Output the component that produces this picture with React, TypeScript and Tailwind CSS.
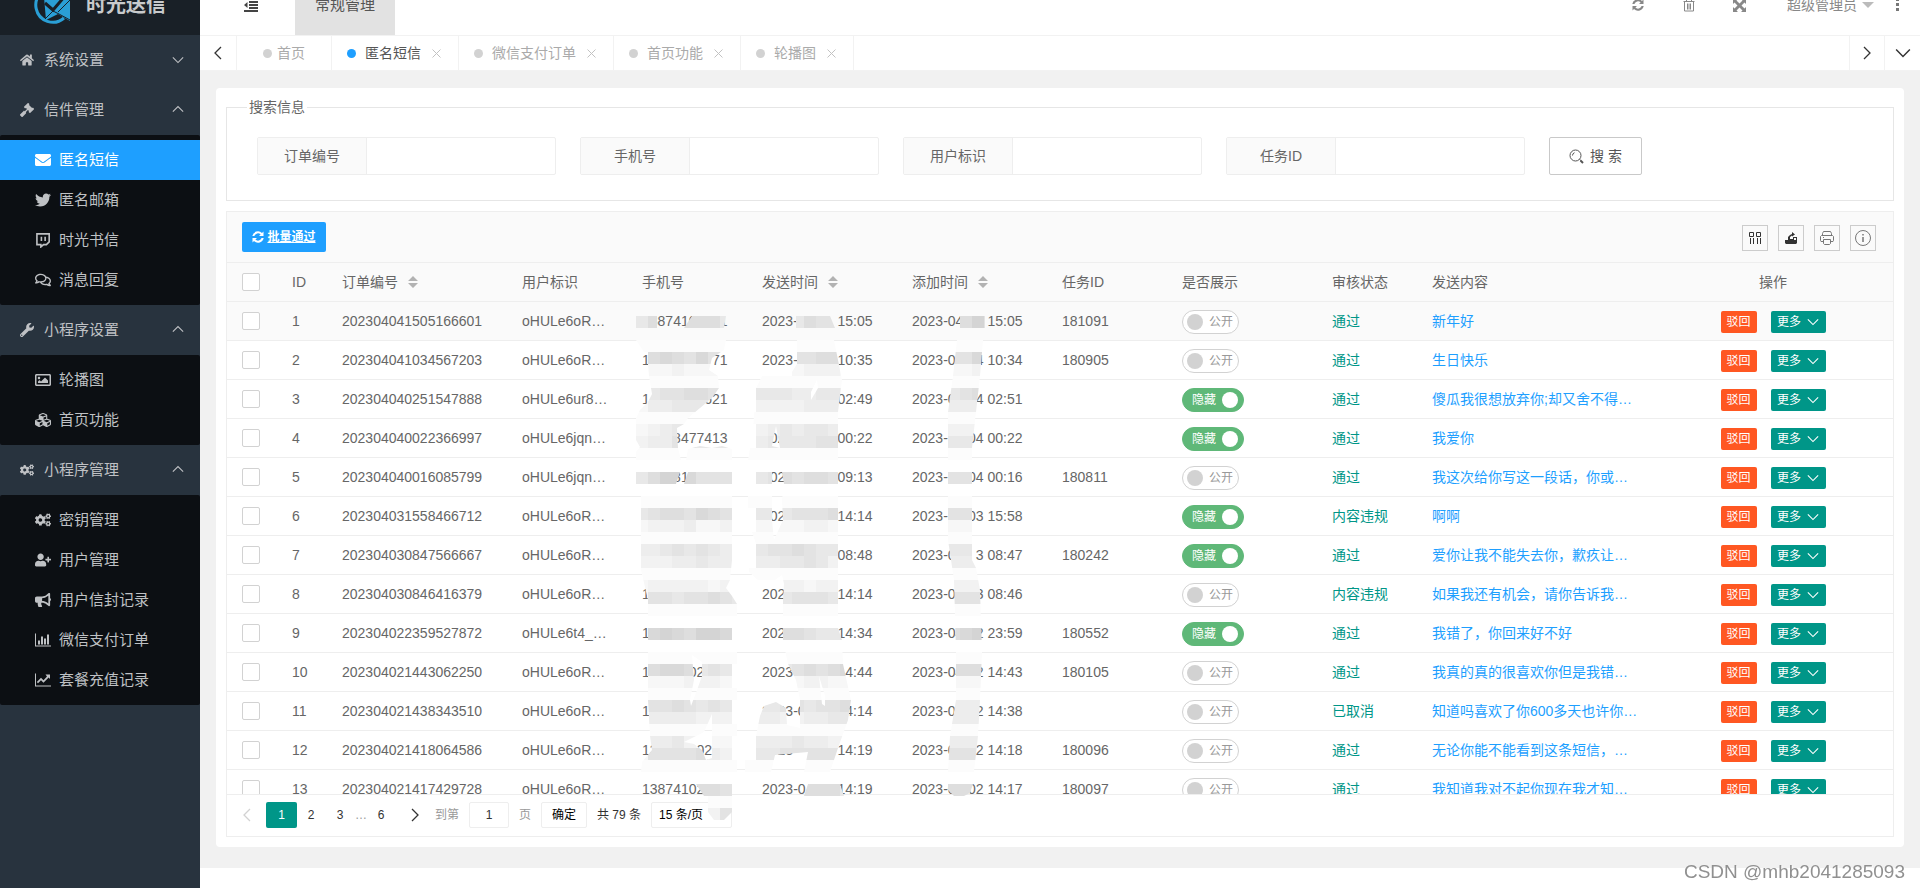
import * as React from "react";
import {
  FaBullhorn,
  FaCogs,
  FaCubes,
  FaEnvelope,
  FaGavel,
  FaHome,
  FaRegComments,
  FaRegImage,
  FaTwitter,
  FaUserPlus,
  FaWrench,
} from "react-icons/fa";
import { clsx } from "clsx";

type IconType = React.ComponentType<{ className?: string }>;

interface MenuGroup {
  title: string;
  icon: IconType;
  open: boolean;
  items: { title: string; icon: IconType; active?: boolean }[];
}

interface OrderRow {
  id: number;
  order: string;
  user: string;
  phone: string;
  send: string;
  add: string;
  task: string;
  hidden: boolean;
  status: string;
  content: string;
}

/* ---------- icons ---------- */

const BarChartIcon: IconType = ({ className }) => (
  <svg viewBox="0 0 16 13" fill="currentColor" className={className}>
    <path d="M0 0h1v12h15v1H0zM3 7h2v4H3zM6 3h2v8H6zM9 5h2v6H9zM12 1h2v10h-2z" />
  </svg>
);

const LineChartIcon: IconType = ({ className }) => (
  <svg viewBox="0 0 16 13" fill="currentColor" className={className}>
    <path d="M0 0h1v12h15v1H0z" />
    <path d="M10.500 1H15v4.500l-1.400-1.400-5.100 5.100-2.500-2.500-3 3L1.800 8.500 6 4.300l2.500 2.500 3.500-3.700z" />
  </svg>
);

const TwitchIcon: IconType = ({ className }) => (
  <svg viewBox="0 0 15 15" fill="none" stroke="currentColor" strokeWidth="1.500" className={className}>
    <path d="M1.800 1.800h11.500v7.400l-2.600 2.600H8L5.500 14v-2.200H1.800zM6 4.500v4M9.500 4.500v4" />
  </svg>
);

function Chevron({ dir, className }: { dir: "up" | "down" | "left" | "right"; className?: string }) {
  const paths = {
    up: "M1 9l6-6 6 6",
    down: "M1 4l6 6 6-6",
    left: "M10 1L4 7l6 6",
    right: "M4 1l6 6-6 6",
  };
  return (
    <svg viewBox="0 0 14 14" fill="none" stroke="currentColor" strokeWidth="1.3" className={className}>
      <path d={paths[dir]} />
    </svg>
  );
}

function Logo() {
  return (
    <svg viewBox="0 0 38 38" className="h-[38px] w-[38px]">
      <path d="M24 3A17 17 0 1 0 30 32" fill="none" stroke="#2a9fd6" strokeWidth="3" />
      <path d="M10 11h26v24l-12-7-12 6z" fill="#2a9fd6" />
      <path d="M11 17l8 7 12-14" fill="none" stroke="#192027" strokeWidth="3" />
      <path d="M11 33l8-8 6 3 11 6M36 14L24 26" fill="none" stroke="#192027" strokeWidth="1" />
    </svg>
  );
}

function ShrinkIcon() {
  return (
    <svg viewBox="0 0 14 14" fill="currentColor" className="h-[14px] w-[14px]">
      <path d="M0 0h14v2H0zM5 3h9v2H5zM5 6h9v2H5zM5 9h9v2H5zM0 12h14v2H0zM3.500 4v6L0 7z" />
    </svg>
  );
}

function RefreshIcon({ className }: { className?: string }) {
  return (
    <svg viewBox="0 0 12 12" fill="currentColor" className={className}>
      <path d="M.300 5A5.800 5.800 0 0 1 10 1.900L11.500.500V5H7l1.600-1.600A3.800 3.800 0 0 0 2.400 5zM11.700 7A5.800 5.800 0 0 1 2 10.100L.500 11.500V7H5L3.400 8.600A3.800 3.800 0 0 0 9.600 7z" />
    </svg>
  );
}

function TrashIcon() {
  return (
    <svg viewBox="0 0 12 14" fill="none" stroke="currentColor" className="h-[14px] w-3">
      <path d="M.500 3.500h11M3.500 3V1.500h5V3M1.500 4v9h9V4M4.500 5.500v6M6 5.500v6M7.500 5.500v6" />
    </svg>
  );
}

function FullscreenIcon() {
  return (
    <svg viewBox="0 0 13 13" fill="currentColor" className="h-[13px] w-[13px]">
      <path d="M0 0h5L3.500 1.500l3 3 3-3L8 0h5v5l-1.500-1.500-3 3 3 3L13 8v5H8l1.500-1.500-3-3-3 3L5 13H0V8l1.500 1.500 3-3-3-3L0 5z" />
    </svg>
  );
}

function SearchIcon() {
  return (
    <svg viewBox="0 0 15 15" fill="none" stroke="currentColor" className="h-[15px] w-[15px]">
      <circle cx="6.500" cy="6.500" r="5.500" />
      <path d="M3.500 6.500a3 3 0 0 1 2-2.800M10.500 10.500l1.500 1" />
      <path d="M11.500 11.500l2.500 2.500" strokeWidth="2" />
    </svg>
  );
}

function SortIcon() {
  return (
    <svg viewBox="0 0 10 12" fill="#b2b2b2" className="h-3 w-[10px]">
      <path d="M5 0l5 5H0zM5 12l5-5H0z" />
    </svg>
  );
}

const toolIcons = [
  {
    label: "筛选列",
    icon: (
      <svg viewBox="0 0 14 14" fill="none" stroke="#333" className="h-[14px] w-[14px]">
        <path d="M1.500 1.500h4v4h-4zM8.500 1.500h4v4h-4zM2.500 7v6M5.500 7v6M9.500 7v6M12.500 7v6" />
      </svg>
    ),
  },
  {
    label: "导出",
    icon: (
      <svg viewBox="0 0 14 14" fill="#333" className="h-[14px] w-[14px]">
        <path d="M1 9h3V6l2-2 2-1V1l3 2.500-3 2V4.500L6 6v2h3V6h4v3v3l-1 1H2l-1-1z" />
        <path d="M10 7h2v2h-2z" fill="#fafafa" />
      </svg>
    ),
  },
  {
    label: "打印",
    icon: (
      <svg viewBox="0 0 14 14" fill="none" stroke="#777" className="h-[14px] w-[14px]">
        <path d="M2.500 4.500v-2l1-2h7l1 2v2M3 10.500H1l-.500-1v-4l1-1h11l1 1v4l-.500 1h-2M3.500 8.500h7v4l-1 1h-5l-1-1zM3 6.500h1" />
      </svg>
    ),
  },
  {
    label: "提示",
    icon: (
      <svg viewBox="0 0 16 16" fill="none" stroke="#777" className="h-4 w-4">
        <circle cx="8" cy="8" r="7.500" />
        <path d="M8 4v1.500M8 7v5" strokeWidth="1.500" />
      </svg>
    ),
  },
];

/* ---------- data ---------- */

const menu: MenuGroup[] = [
  { title: "系统设置", icon: FaHome, open: false, items: [] },
  {
    title: "信件管理",
    icon: FaGavel,
    open: true,
    items: [
      { title: "匿名短信", icon: FaEnvelope, active: true },
      { title: "匿名邮箱", icon: FaTwitter },
      { title: "时光书信", icon: TwitchIcon },
      { title: "消息回复", icon: FaRegComments },
    ],
  },
  {
    title: "小程序设置",
    icon: FaWrench,
    open: true,
    items: [
      { title: "轮播图", icon: FaRegImage },
      { title: "首页功能", icon: FaCubes },
    ],
  },
  {
    title: "小程序管理",
    icon: FaCogs,
    open: true,
    items: [
      { title: "密钥管理", icon: FaCogs },
      { title: "用户管理", icon: FaUserPlus },
      { title: "用户信封记录", icon: FaBullhorn },
      { title: "微信支付订单", icon: BarChartIcon },
      { title: "套餐充值记录", icon: LineChartIcon },
    ],
  },
];

const tabs = ["匿名短信", "微信支付订单", "首页功能", "轮播图"];
const searchFields = ["订单编号", "手机号", "用户标识", "任务ID"];

// "*" stands for a digit that is masked out
const rows: OrderRow[] = [
  { id: 1, order: "202304041505166601", user: "oHULe6oR…", phone: "*38741025*1", send: "2023-**-** 15:05", add: "2023-04-** 15:05", task: "181091", hidden: false, status: "通过", content: "新年好" },
  { id: 2, order: "202304041034567203", user: "oHULe6oR…", phone: "1********71", send: "2023-**-** 10:35", add: "2023-0*-*4 10:34", task: "180905", hidden: false, status: "通过", content: "生日快乐" },
  { id: 3, order: "202304040251547888", user: "oHULe6ur8…", phone: "1*******621", send: "****-**-** 02:49", add: "2023-0*-*4 02:51", task: "", hidden: true, status: "通过", content: "傻瓜我很想放弃你;却又舍不得…" },
  { id: 4, order: "202304040022366997", user: "oHULe6jqn…", phone: "****8477413", send: "*02*-**-** 00:22", add: "2023-**-04 00:22", task: "", hidden: true, status: "通过", content: "我爱你" },
  { id: 5, order: "202304040016085799", user: "oHULe6jqn…", phone: "****81*****", send: "*02*-**-** 09:13", add: "2023-**-04 00:16", task: "180811", hidden: false, status: "通过", content: "我这次给你写这一段话，你或…" },
  { id: 6, order: "202304031558466712", user: "oHULe6oR…", phone: "***********", send: "*02*-**-** 14:14", add: "2023-**-03 15:58", task: "", hidden: true, status: "内容违规", content: "啊啊" },
  { id: 7, order: "202304030847566667", user: "oHULe6oR…", phone: "***********", send: "****-**-** 08:48", add: "2023-0*-*3 08:47", task: "180242", hidden: true, status: "通过", content: "爱你让我不能失去你，歉疚让…" },
  { id: 8, order: "202304030846416379", user: "oHULe6oR…", phone: "1**********", send: "202*-**-** 14:14", add: "2023-0*-*3 08:46", task: "", hidden: false, status: "内容违规", content: "如果我还有机会，请你告诉我…" },
  { id: 9, order: "202304022359527872", user: "oHULe6t4_…", phone: "1**********", send: "202*-**-** 14:34", add: "2023-04-*2 23:59", task: "180552", hidden: true, status: "通过", content: "我错了，你回来好不好" },
  { id: 10, order: "202304021443062250", user: "oHULe6oR…", phone: "1*****02***", send: "2023-**-** 14:44", add: "2023-04-*2 14:43", task: "180105", hidden: false, status: "通过", content: "我真的真的很喜欢你但是我错…" },
  { id: 11, order: "202304021438343510", user: "oHULe6oR…", phone: "1**********", send: "2023-0*-** 14:14", add: "2023-0*-*2 14:38", task: "", hidden: false, status: "已取消", content: "知道吗喜欢了你600多天也许你…" },
  { id: 12, order: "202304021418064586", user: "oHULe6oR…", phone: "13*****02**", send: "2023-**-** 14:19", add: "2023-0*-*2 14:18", task: "180096", hidden: false, status: "通过", content: "无论你能不能看到这条短信，…" },
  { id: 13, order: "202304021417429728", user: "oHULe6oR…", phone: "13874102***", send: "2023-0*-** 14:19", add: "2023-0*-02 14:17", task: "180097", hidden: false, status: "通过", content: "我知道我对不起你现在我才知…" },
];

// two no-break spaces are as wide as one digit
const masked = (text: string) => text.replace(/\*/g, "\u00a0\u00a0");

/* ---------- privacy mosaic ---------- */

// one entry per 12px band: y, then grey levels for the phone, send time and add time columns
const mosaicBands: [number, string, string, string][] = [
  [316, "468666642", "....46554", "..685"],
  [340, "000000000", "000000000", "00000"],
  [352, ".67657540", "....55664", ".5574"],
  [364, "111211110", "....12221", ".1122"],
  [376, "000000000", "000000000", "00000"],
  [388, "245566544", ".44433443", ".4566"],
  [400, "133444311", ".22223332", ".3333"],
  [412, "000000000", "000000000", "00000"],
  [424, "123442000", ".23434433", ".2222"],
  [436, "233554444", ".34444555", ".4444"],
  [448, "000000000", "000000000", "00000"],
  [472, "468875555", ".45656656", ".5554"],
  [496, "000000000", "000000000", "00000"],
  [508, "456657654", ".44455566", ".5554"],
  [520, "122231122", ".11112211", ".1111"],
  [532, "000000000", "000000000", "00000"],
  [544, "334545432", ".45565443", ".4444"],
  [556, "222334332", ".33445422", ".3333"],
  [568, "000000000", "000000000", "00000"],
  [580, "122222122", "...221222", ".2222"],
  [592, "155455654", "...455544", ".5554"],
  [604, "000000000", "000000000", "00000"],
  [628, "67876887.", "...665445", ".6787"],
  [652, "000000000", "000000000", "00000"],
  [664, "66776454.", "...456567", ".6665"],
  [676, "11112221.", "...112211", ".1111"],
  [688, "000000000", "000000000", "00000"],
  [700, "45565454.", ".44554556", ".3333"],
  [712, "23333222.", ".33223344", ".3333"],
  [724, "000000000", "000000000", "00000"],
  [736, "13342111.", ".33343322", ".3333"],
  [748, "15555632.", ".44555554", ".5554"],
  [760, "000000000", "000000000", "00000"],
  [784, ".....665.", ".....6664", ".6666"],
  [796, "......00.", ".........", "....."],
  [808, "......25.", ".........", "....."],
];

const mosaicShape = [
  // phone
  "M636 316H657V328H636zM692 316H726L724 328H684z",
  "M636 340H726L724 350L712 358L709 370L718 376L719 388L712 398L700 408L688 418L684 424L677 428L678 448L681 460H628L636 452L640 447L636 440V418L640 410L648 402L652 394L649 376L648 364L644 352z",
  "M686 460L688 449L700 446L712 448L722 446L732 449V460z",
  "M636 472H680L676 484H636zM688 472H732V484H684z",
  "M641 496H732V560L730 580L726 588L732 596L737 604V772H641L642 762L652 750L650 736L648 700V600L641 570z",
  "M692 655L702 662V676L697 690L691 706L690 700L694 680z",
  "M712 714L704 732L692 738L684 742L694 744L702 750L706 760L712 758z",
  "M696 784H732V812L724 820H714L708 812L704 796z",
  // send time
  "M796 316H830L835 328H796z",
  "M797 340H834L842 380L838 412V628L842 640L843 664L851 700L848 720L838 748L830 772H804L808 752L775 755L771 772H745V760H756V736L760 716L764 706L776 702L786 708L787 725L800 728V700L796 680L788 664L783 640V600L784 584L782 575L772 582L760 582L749 572V560L756 556V544L748 520V496L756 484V472L748 460L753 430L756 388L762 376L780 373L792 372L797 364z",
  "M772 472H782L784 484L782 500L783 520L774 540L772 520z",
  "M811 392V400L818 388L817 380zM776 426L780 448L772 446zM819 676L825 696V706L822 704z",
  "M808 784H840L844 796H804z",
  // add time
  "M960 316H985V328H960z",
  "M957 340H983L980 376L976 412L972 448V560L976 568L980 590L982 652L980 700L978 736L974 772H948L950 736L956 700V652L954 580L948 540V412L953 376z",
  "M948 784H973L970 793L962 797L954 796L948 790z",
].join("");

function Mosaic() {
  const cells: React.ReactNode[] = [];
  mosaicBands.forEach(([y, phone, send, add]) => {
    const groups: [number, string][] = [
      [636, phone],
      [744, send],
      [936, add],
    ];
    groups.forEach(([start, levels]) => {
      levels.split("").forEach((level, i) => {
        if (level === ".") return;
        const grey = 252 - Number(level) * 5;
        cells.push(
          <rect
            key={`${start}-${y}-${i}`}
            x={start + i * 12}
            y={y}
            width="12"
            height="12"
            fill={`rgb(${grey}, ${grey}, ${grey})`}
          />
        );
      });
    });
  });

  return (
    <svg
      viewBox="624 316 372 508"
      aria-hidden="true"
      className="pointer-events-none absolute top-[104px] left-[397px] h-[508px] w-[372px]"
    >
      <clipPath id="mosaic">
        <path d={mosaicShape} clipRule="evenodd" />
      </clipPath>
      <g clipPath="url(#mosaic)" shapeRendering="crispEdges">
        {cells}
      </g>
    </svg>
  );
}

/* ---------- parts ---------- */

function Sidebar() {
  return (
    <aside className="w-[200px] shrink-0 bg-[#28333e] text-[15px] text-[#bfc1c4]">
      <div className="flex h-[35px] items-end overflow-hidden bg-[#192027]">
        <div className="flex h-[60px] items-center gap-[14px] pl-[34px] text-xl font-bold text-[#c8cacc]">
          <Logo />
          <span>时光送信</span>
        </div>
      </div>
      <nav>
        {menu.map((group) => (
          <div key={group.title}>
            <a href="#" className="flex h-[50px] items-center pr-4 pl-5">
              <span className="w-6">
                <group.icon className="h-[14px] w-[14px]" />
              </span>
              <span className="flex-1">{group.title}</span>
              <Chevron dir={group.open ? "up" : "down"} className="h-3 w-3" />
            </a>
            {group.open && (
              <div className="rounded-[2px] bg-[#0c0f13] py-[5px]">
                {group.items.map((item) => (
                  <a
                    key={item.title}
                    href="#"
                    className={clsx(
                      "flex h-10 items-center pl-[35px]",
                      item.active && "bg-[#1e9fff] text-white"
                    )}
                  >
                    <span className="w-6">
                      <item.icon className="h-4 w-4" />
                    </span>
                    {item.title}
                  </a>
                ))}
              </div>
            )}
          </div>
        ))}
      </nav>
    </aside>
  );
}

function Header() {
  return (
    <header className="flex h-[35px] items-end overflow-hidden bg-white">
      <div className="flex h-[60px] flex-1 items-center">
        <button aria-label="收起菜单" className="flex w-[95px] justify-center pl-[6px] text-[#444]">
          <ShrinkIcon />
        </button>
        <a href="#" className="flex h-[60px] w-[100px] items-center justify-center bg-[#e2e2e2] text-[15px] text-[#555]">
          常规管理
        </a>
        <div className="ml-auto flex items-center pr-5 text-[#888]">
          <button aria-label="刷新" className="flex w-[51px] justify-center">
            <RefreshIcon className="h-3 w-3" />
          </button>
          <button aria-label="清理缓存" className="flex w-[51px] justify-center">
            <TrashIcon />
          </button>
          <button aria-label="全屏" className="flex w-[51px] justify-center">
            <FullscreenIcon />
          </button>
          <button className="ml-[22px] flex items-center gap-[5px] text-sm">
            超级管理员
            <svg viewBox="0 0 12 6" fill="#bbb" className="h-[6px] w-3">
              <path d="M0 0h12L6 6z" />
            </svg>
          </button>
          <button aria-label="更多" className="ml-[22px]">
            <svg viewBox="0 0 4 14" fill="#777" className="h-[14px] w-1">
              <path d="M0 0h3v3H0zM0 5h3v3H0zM0 10h3v3H0z" />
            </svg>
          </button>
        </div>
      </div>
    </header>
  );
}

function TabBar() {
  return (
    <div className="flex h-9 border-y border-[#f2f2f2] bg-white text-sm text-[#aaa]">
      <button aria-label="向左" className="flex w-[37px] items-center justify-center border-r border-[#f2f2f2] text-[#333]">
        <Chevron dir="left" className="h-[14px] w-[14px]" />
      </button>
      <a href="#" className="flex items-center gap-[5px] border-r border-[#f2f2f2] px-[26px]">
        <span className="h-[9px] w-[9px] rounded-full bg-[#d2d2d2]" />
        首页
      </a>
      {tabs.map((tab, i) => (
        <div key={tab} className="flex items-center border-r border-[#f2f2f2] pr-[17px] pl-[15px]">
          <a href="#" className={clsx("flex items-center gap-[9px]", i === 0 && "text-[#555]")}>
            <span className={clsx("h-[9px] w-[9px] rounded-full", i === 0 ? "bg-[#1e9fff]" : "bg-[#d2d2d2]")} />
            {tab}
          </a>
          <button aria-label={`关闭${tab}`} className="ml-[11px] text-[#c2c2c2]">
            <svg viewBox="0 0 9 9" stroke="currentColor" className="h-[9px] w-[9px]">
              <path d="M.500.500l8 8M8.500.500l-8 8" />
            </svg>
          </button>
        </div>
      ))}
      <div className="ml-auto flex text-[#333]">
        <button aria-label="向右" className="flex w-[35px] items-center justify-center border-l border-[#f2f2f2]">
          <Chevron dir="right" className="h-[14px] w-[14px]" />
        </button>
        <button aria-label="标签操作" className="flex w-9 items-center justify-center border-l border-[#f2f2f2]">
          <Chevron dir="down" className="h-4 w-4" />
        </button>
      </div>
    </div>
  );
}

function SearchForm() {
  return (
    <fieldset className="border border-[#e6e6e6]">
      <legend className="ml-5 px-[2px] text-sm leading-5">搜索信息</legend>
      <form className="flex flex-wrap gap-6 px-[30px] pt-5 pb-[25px]">
        {searchFields.map((field) => (
          <div key={field} className="flex h-[38px] w-[299px] rounded-[2px] border border-[#eee]">
            <label
              htmlFor={field}
              className="flex w-[109px] items-center justify-center border-r border-[#eee] bg-[#fafafa] text-sm"
            >
              {field}
            </label>
            <input id={field} type="text" className="min-w-0 flex-1 px-[10px] text-sm outline-none" />
          </div>
        ))}
        <button
          type="button"
          className="flex h-[38px] w-[93px] items-center justify-center gap-[6px] rounded-[2px] border border-[#c9c9c9] text-sm text-[#555]"
        >
          <SearchIcon />搜 索
        </button>
      </form>
    </fieldset>
  );
}

function CheckBox({ label }: { label: string }) {
  return (
    <input
      type="checkbox"
      aria-label={label}
      className="block h-[18px] w-[18px] appearance-none rounded-[2px] border border-[#d2d2d2] bg-white checked:border-[#5fb878] checked:bg-[#5fb878]"
    />
  );
}

function Switch({ on }: { on: boolean }) {
  return (
    <label
      className={clsx(
        "relative flex h-6 items-center justify-between rounded-full border text-xs",
        on
          ? "w-[62px] border-[#5fb878] bg-[#5fb878] pr-[5px] pl-[9px] text-white"
          : "w-[57px] border-[#d2d2d2] bg-white pr-[5px] pl-1 text-[#999]"
      )}
    >
      <input type="checkbox" defaultChecked={on} className="sr-only" />
      {on && <span>隐藏</span>}
      <span className={clsx("h-4 w-4 rounded-full", on ? "bg-white" : "bg-[#d2d2d2]")} />
      {!on && <span>公开</span>}
    </label>
  );
}

function OrderTable() {
  return (
    <div className="h-[531px] overflow-hidden">
      <table className="w-full table-fixed border-separate border-spacing-0 text-left text-sm whitespace-nowrap">
        <colgroup>
          <col className="w-[50px]" />
          <col className="w-[50px]" />
          <col className="w-[180px]" />
          <col className="w-[120px]" />
          <col className="w-[120px]" />
          <col className="w-[150px]" />
          <col className="w-[150px]" />
          <col className="w-[120px]" />
          <col className="w-[150px]" />
          <col className="w-[100px]" />
          <col />
          <col className="w-[240px]" />
        </colgroup>
        <thead>
          <tr className="bg-[#fafafa] [&>th]:h-[39px] [&>th]:border-b [&>th]:border-[#eee] [&>th]:px-[15px] [&>th]:font-normal">
            <th>
              <CheckBox label="全选" />
            </th>
            <th>ID</th>
            <th>
              <span className="flex items-center gap-[10px]">
                订单编号 <SortIcon />
              </span>
            </th>
            <th>用户标识</th>
            <th>手机号</th>
            <th>
              <span className="flex items-center gap-[10px]">
                发送时间 <SortIcon />
              </span>
            </th>
            <th>
              <span className="flex items-center gap-[10px]">
                添加时间 <SortIcon />
              </span>
            </th>
            <th>任务ID</th>
            <th>是否展示</th>
            <th>审核状态</th>
            <th>发送内容</th>
            <th className="text-center">操作</th>
          </tr>
        </thead>
        <tbody>
          {rows.map((row) => (
            <tr
              key={row.id}
              className={clsx(
                "hover:bg-[#fafafa] [&>td]:h-[39px] [&>td]:border-b [&>td]:border-[#eee] [&>td]:px-[15px]",
                row.id === 1 && "bg-[#fafafa]"
              )}
            >
              <td>
                <CheckBox label={`选择 ${row.id}`} />
              </td>
              <td>{row.id}</td>
              <td>{row.order}</td>
              <td>{row.user}</td>
              <td>{masked(row.phone)}</td>
              <td>{masked(row.send)}</td>
              <td>{masked(row.add)}</td>
              <td>{row.task}</td>
              <td className="pt-[2px]">
                <Switch on={row.hidden} />
              </td>
              <td className="text-[#009688]">{row.status}</td>
              <td className="text-[#1e9fff]">{row.content}</td>
              <td className="pt-[2px]">
                <div className="flex justify-center gap-[14px] text-xs text-white">
                  <button className="h-[22px] w-9 rounded-[2px] bg-[#ff5722]">驳回</button>
                  <button className="flex h-[22px] w-[55px] items-center justify-center gap-[6px] rounded-[2px] bg-[#009688]">
                    更多
                    <Chevron dir="down" className="h-3 w-3" />
                  </button>
                </div>
              </td>
            </tr>
          ))}
        </tbody>
      </table>
    </div>
  );
}

function Pagination() {
  return (
    <div className="flex h-[42px] items-start border-t border-[#eee] pt-[7px] text-xs leading-[26px] text-[#333]">
      <button aria-label="上一页" className="flex h-[26px] w-[39px] items-center justify-center text-[#d2d2d2]">
        <Chevron dir="left" className="h-[14px] w-[14px]" />
      </button>
      <button className="h-[26px] w-[31px] rounded-[2px] bg-[#009688] text-white">1</button>
      <button className="h-[26px] w-7">2</button>
      <button className="h-[26px] w-[30px]">3</button>
      <span className="w-3 text-center text-[#999]">…</span>
      <button className="h-[26px] w-7">6</button>
      <button aria-label="下一页" className="flex h-[26px] w-10 items-center justify-center">
        <Chevron dir="right" className="h-[14px] w-[14px]" />
      </button>
      <div className="flex gap-[10px]">
        <label htmlFor="page" className="text-[#999]">
          到第
        </label>
        <input
          id="page"
          type="text"
          defaultValue="1"
          className="h-[26px] w-10 rounded-[2px] border border-[#eee] text-center"
        />
        <span className="text-[#999]">页</span>
        <button className="h-[26px] w-[46px] rounded-[2px] border border-[#eee] leading-6 text-black">确定</button>
        <span>共 79 条</span>
        <select
          aria-label="每页条数"
          className="h-[26px] w-[81px] appearance-none rounded-[2px] border border-[#eee] bg-white px-[7px] leading-6 text-black"
        >
          <option>15 条/页</option>
          <option>30 条/页</option>
        </select>
      </div>
    </div>
  );
}

export default function App() {
  return (
    <div className="flex min-h-screen bg-white font-['Liberation_Sans','Noto_Sans_CJK_SC',sans-serif] text-[#666]">
      <Sidebar />
      <div className="min-w-0 flex-1">
        <Header />
        <TabBar />
        <main className="bg-[#f1f1f1] px-4 pt-[17px] pb-[21px]">
          <div className="rounded bg-white px-[10px] pt-[9px] pb-[10px]">
            <SearchForm />
            <section className="relative mt-[10px] border border-[#eee]">
              <div className="flex h-[51px] items-center border-b border-[#eee] bg-[#fafafa] pr-[17px] pl-[15px]">
                <button className="flex h-[30px] w-[84px] items-center justify-center gap-[3px] rounded-[2px] bg-[#1e9fff] text-xs font-bold text-white underline">
                  <RefreshIcon className="h-3 w-3" />
                  批量通过
                </button>
                <div className="ml-auto flex gap-[10px] pt-[2px]">
                  {toolIcons.map((tool) => (
                    <button
                      key={tool.label}
                      aria-label={tool.label}
                      className="flex h-[26px] w-[26px] items-center justify-center border border-[#ccc]"
                    >
                      {tool.icon}
                    </button>
                  ))}
                </div>
              </div>
              <OrderTable />
              <Pagination />
              <Mosaic />
            </section>
          </div>
        </main>
      </div>
      <div className="pointer-events-none fixed right-[15px] bottom-[2px] text-[19px] text-[#909090] [text-shadow:1px_1px_0_#fff]">
        CSDN @mhb2041285093
      </div>
    </div>
  );
}
